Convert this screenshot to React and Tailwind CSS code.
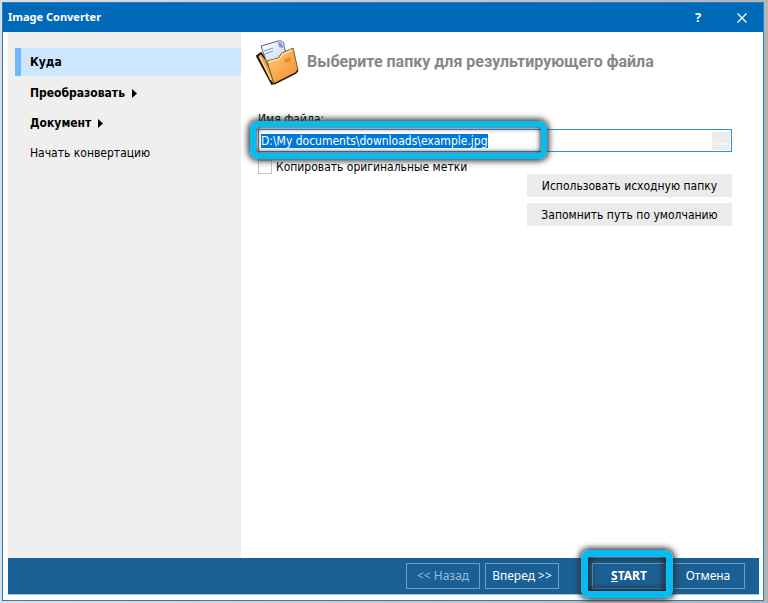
import { useEffect, useRef, useState } from 'react';

const navItems = [
  { label: 'Куда', active: true },
  { label: 'Преобразовать', arrow: true },
  { label: 'Документ', arrow: true },
];

const footerButton =
  'w-[74px] h-[26px] flex items-center justify-center border border-[#6f9dbf] leading-none whitespace-nowrap';

const FolderIcon = () => (
  <svg className="w-[43px] h-[45px] shrink-0" viewBox="0 0 43 45" aria-hidden="true">
    <defs>
      <linearGradient id="front" x1="0" y1="0" x2="1" y2="1">
        <stop offset="0" stopColor="#ffd08a" />
        <stop offset="0.5" stopColor="#fbab52" />
        <stop offset="1" stopColor="#f08a26" />
      </linearGradient>
      <linearGradient id="paper" x1="0" y1="0" x2="1" y2="1">
        <stop offset="0" stopColor="#ffffff" />
        <stop offset="0.6" stopColor="#dbe5f8" />
        <stop offset="1" stopColor="#8fa6dc" />
      </linearGradient>
    </defs>
    <path d="M1 16 5 13 12 22 19 42 16 44Z" fill="#e8a93c" stroke="#1d1710" strokeWidth="2" strokeLinejoin="round" />
    <path d="M4 17 15 40" fill="none" stroke="#ffe08a" strokeWidth="1.4" />
    <path d="M5 6 22 1C26 0 29 3 28 7L31 15 12 26Z" fill="url(#paper)" stroke="#5b6484" strokeWidth="1" strokeLinejoin="round" />
    <path d="M8 11l9-3M9 14l8-3" fill="none" stroke="#8294c5" strokeWidth="1" />
    <path d="M22 2C25 2 27 4 27 8L23 7Z" fill="#8198d2" />
    <path d="M11 21 22 18 26 13 37 8 42 30 40 33 18 44Z" fill="url(#front)" stroke="#5e3c12" strokeWidth="0.8" strokeLinejoin="round" />
    <path d="M12 22 23 19 27 14 36 10" fill="none" stroke="#ffe3ab" strokeWidth="1.4" />
    <path d="M18 44 40 33 42 30" fill="none" stroke="#2b1c0a" strokeWidth="1.4" />
    <path d="M28 19l6-2 1 4-6 2Z" fill="#e98a32" />
  </svg>
);

const App = () => {
  const [path, setPath] = useState('D:\\My documents\\downloads\\example.jpg');
  const pathRef = useRef(null);

  useEffect(() => {
    pathRef.current.focus();
    pathRef.current.select();
  }, []);

  return (
    <div className="min-h-screen flex flex-col bg-gradient-to-r from-[#dedede] to-[#b4b4b4] pt-[2px] pl-[2px] pr-1 pb-[2px] font-['DejaVu_Sans_Condensed','DejaVu_Sans',sans-serif] font-stretch-condensed text-xs text-black">
      <div className="flex-1 flex flex-col bg-white border border-[#1c82cf]">
        {/* Title bar */}
        <header className="h-[29px] shrink-0 flex items-center bg-[#006ab8] pl-[5px] text-white font-['Noto_Sans',sans-serif] font-stretch-normal">
          <h1 className="flex-1 text-[11px] font-bold">Image Converter</h1>
          <button type="button" aria-label="Справка" className="w-[44px] h-full flex items-center justify-center text-[13px] font-bold">
            ?
          </button>
          <button type="button" aria-label="Закрыть" className="w-[43px] h-full flex items-center justify-center">
            <svg className="w-[10px] h-[10px]" viewBox="0 0 10 10" fill="none" stroke="currentColor" strokeWidth="1.3">
              <path d="M0.5 0.5 9.5 9.5M9.5 0.5 0.5 9.5" />
            </svg>
          </button>
        </header>

        <div className="flex-1 flex flex-col pl-[5px] pr-1 pb-[5px]">
          <div className="flex-1 flex">
            {/* Steps */}
            <nav className="w-[233px] shrink-0 bg-[#efefef] pt-4 pl-[7px] flex flex-col">
              {navItems.map((item) => (
                <a
                  key={item.label}
                  href="#"
                  className={
                    item.active
                      ? 'h-7 mb-[2px] flex items-center font-bold bg-[#cce6ff] border-l-[6px] border-[#6fb7ff] pl-[9px]'
                      : 'h-[30px] flex items-center gap-[7px] font-bold pl-[15px]'
                  }
                >
                  {item.label}
                  {item.arrow && (
                    <svg className="w-[5px] h-[9px]" viewBox="0 0 5 9" fill="currentColor">
                      <path d="M0 0 5 4.5 0 9Z" />
                    </svg>
                  )}
                </a>
              ))}
              <a href="#" className="h-[30px] flex items-center pl-[15px]">
                Начать конвертацию
              </a>
            </nav>

            {/* Output folder */}
            <main className="flex-1 pl-[15px] pr-[27px] pt-2">
              <div className="flex items-center gap-2">
                <FolderIcon />
                <h2 className="pb-[2px] text-base font-bold text-[#878787] font-['Roboto',sans-serif] font-stretch-normal whitespace-nowrap">
                  Выберите папку для результирующего файла
                </h2>
              </div>

              <div className="pl-[2px] pt-[26px]">
                <label htmlFor="path" className="block h-[18px] leading-4">
                  Имя файла:
                </label>
                <div className="relative h-[23px] flex items-center bg-white ring-1 ring-inset ring-[#2b8fe6] pl-[3px] pr-[2px]">
                  <input
                    id="path"
                    ref={pathRef}
                    type="text"
                    value={path}
                    onChange={(e) => setPath(e.target.value)}
                    spellCheck={false}
                    className="flex-1 min-w-0 h-[19px] outline-none selection:bg-[#0078d7] selection:text-white"
                  />
                  <button type="button" className="w-[18px] h-[18px] flex items-center justify-center bg-[#ececec] text-white font-bold">
                    ...
                  </button>
                  <span className="absolute -left-2 -top-2 w-[297px] h-[38px] rounded-lg border-[6px] border-[#06baf2] shadow-[0_0_6px_2px_#333,inset_0_0_5px_1px_#333] pointer-events-none" />
                </div>

                <div className="mt-2 h-[14px] flex items-center gap-1">
                  <input id="tags" type="checkbox" className="appearance-none w-[14px] h-[14px] bg-white border border-[#c4c4c4] checked:bg-[#0078d7]" />
                  <label htmlFor="tags">Копировать оригинальные метки</label>
                </div>
                <div className="flex flex-col items-end gap-[6px]">
                  <button type="button" className="w-[205px] h-[23px] bg-[#ebebeb]">
                    Использовать исходную папку
                  </button>
                  <button type="button" className="w-[205px] h-[23px] bg-[#ebebeb]">
                    Запомнить путь по умолчанию
                  </button>
                </div>
              </div>
            </main>
          </div>

          {/* Footer */}
          <footer className="h-[37px] shrink-0 flex items-center justify-end bg-[#1b6094] border-b border-[#a9c5da] pr-[14px] text-white font-['Noto_Sans',sans-serif] font-stretch-normal">
            <button type="button" className={`${footerButton} mr-[5px] text-[#9dbbd2]`}>
              &lt;&lt; Назад
            </button>
            <button type="button" className={`${footerButton} mr-[33px]`}>
              Вперед &gt;&gt;
            </button>
            <div className="relative mr-[5px]">
              <button type="button" className={`${footerButton} font-bold`}>
                <span className="underline">S</span>TART
              </button>
              <span className="absolute -left-[11px] -top-[13px] w-[92px] h-[48px] rounded-lg border-[7px] border-[#06baf2] shadow-[0_0_6px_2px_#333,inset_0_0_6px_2px_#222] pointer-events-none" />
            </div>
            <button type="button" className={footerButton}>
              Отмена
            </button>
          </footer>
        </div>
      </div>
    </div>
  );
};

export default App;
